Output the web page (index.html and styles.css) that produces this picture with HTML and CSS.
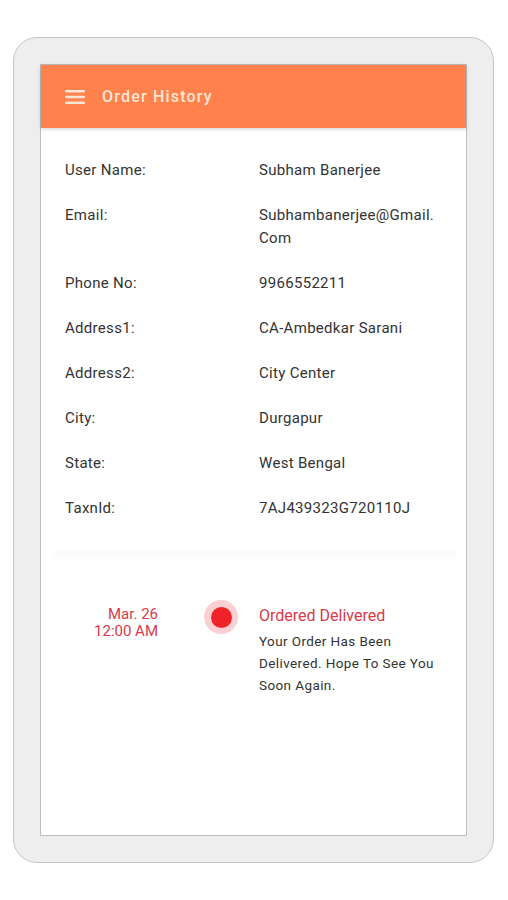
FILE: index.html
```html
<!DOCTYPE html>
<html lang="en">
  <head>
    <meta charset="UTF-8" />
    <meta name="viewport" content="width=device-width, initial-scale=1.0" />
    <title>Order History</title>
    <link rel="stylesheet" href="styles.css">
  </head>
  <body>
    <div class="device">
      <div class="screen">
        <header class="toolbar">
          <svg class="menu-icon" width="20" height="14" viewBox="0 0 20 14">
            <rect x="0" y="0" width="20" height="2.4" rx="1" fill="#fde6d6" />
            <rect x="0" y="5.8" width="20" height="2.4" rx="1" fill="#fde6d6" />
            <rect x="0" y="11.6" width="20" height="2.4" rx="1" fill="#fde6d6" />
          </svg>
          <h1>Order History</h1>
        </header>

        <div class="details">
          <div class="row">
            <span class="label">User Name:</span>
            <span class="value">Subham Banerjee</span>
          </div>
          <div class="row">
            <span class="label">Email:</span>
            <span class="value">Subhambanerjee@Gmail.<wbr>Com</span>
          </div>
          <div class="row">
            <span class="label">Phone No:</span>
            <span class="value">9966552211</span>
          </div>
          <div class="row">
            <span class="label">Address1:</span>
            <span class="value">CA-Ambedkar Sarani</span>
          </div>
          <div class="row">
            <span class="label">Address2:</span>
            <span class="value">City Center</span>
          </div>
          <div class="row">
            <span class="label">City:</span>
            <span class="value">Durgapur</span>
          </div>
          <div class="row">
            <span class="label">State:</span>
            <span class="value">West Bengal</span>
          </div>
          <div class="row">
            <span class="label">TaxnId:</span>
            <span class="value">7AJ439323G720110J</span>
          </div>
        </div>

        <div class="divider"></div>

        <div class="timeline">
          <div class="event">
            <div class="event-date">Mar. 26<br />12:00 AM</div>
            <div class="event-dot"><span></span></div>
            <div class="event-body">
              <div class="event-title">Ordered Delivered</div>
              <p>Your Order Has Been Delivered. Hope To See You Soon Again.</p>
            </div>
          </div>
        </div>
      </div>
    </div>
  </body>
</html>
```

FILE: styles.css
```css
body {
  margin: 0;
  background-color: #ffffff;
  font-family: Roboto, "Liberation Sans", Arial, sans-serif;
  color: #333333;
}
.device {
  box-sizing: border-box;
  width: 481px;
  height: 826px;
  margin: 37px 0 0 13px;
  padding: 26px;
  background: #eeeeee;
  border: 1.5px solid #c6c6c6;
  border-radius: 24px;
}
.screen {
  box-sizing: border-box;
  height: 100%;
  background: white;
  border: 1.5px solid #bdbdbd;
}
.toolbar {
  display: flex;
  align-items: center;
  height: 63px;
  padding-left: 24px;
  background-color: #ff824d;
  box-shadow: 0 1px 4px rgba(0, 0, 0, 0.18);
}
.menu-icon {
  margin-right: 17px;
}
.toolbar h1 {
  margin: 0;
  font-size: 16px;
  font-weight: 500;
  letter-spacing: 1.2px;
  color: #fde6d6;
}
.details {
  padding: 31px 14px 0 24px;
}
.row {
  display: grid;
  grid-template-columns: 194px 1fr;
  font-size: 15px;
  letter-spacing: 0.3px;
  line-height: 23px;
  margin-bottom: 22px;
}
.row:last-child {
  margin-bottom: 0;
}
.divider {
  height: 2px;
  margin: 31px 10px 0 12px;
  border-radius: 2px;
  box-shadow: 0 3px 6px rgba(0, 0, 0, 0.07);
  background: #fafafa;
}
.timeline {
  padding-top: 47px;
}
.event {
  display: flex;
  align-items: flex-start;
}
.event-date {
  width: 117px;
  margin-top: 6px;
  text-align: right;
  font-size: 15px;
  line-height: 17px;
  color: #d83a4a;
}
.event-dot {
  display: flex;
  align-items: center;
  justify-content: center;
  width: 34px;
  height: 34px;
  margin-left: 46px;
  border-radius: 50%;
  background: #fbd0d2;
}
.event-dot span {
  width: 21px;
  height: 21px;
  border-radius: 50%;
  background: #ee2228;
}
.event-body {
  width: 185px;
  margin-left: 21px;
  margin-top: 6px;
}
.event-title {
  font-size: 16px;
  line-height: 20px;
  color: #d83a4a;
}
.event-body p {
  margin: 4px 0 0;
  font-size: 13.5px;
  letter-spacing: 0.4px;
  line-height: 22px;
  color: #333333;
}
```
